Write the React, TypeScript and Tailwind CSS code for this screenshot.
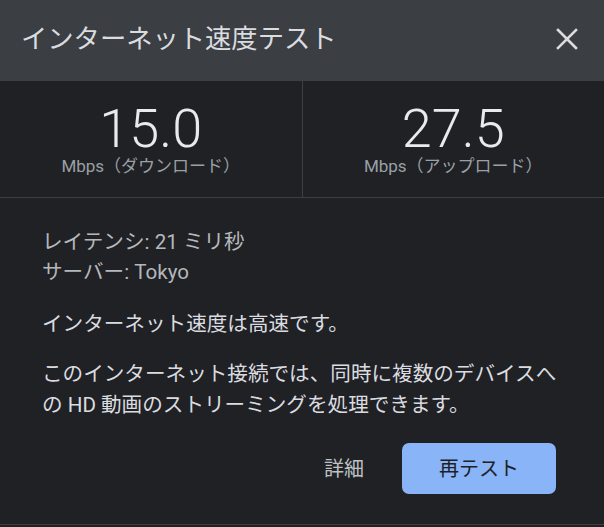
import React from "react";

const FONT = 'Roboto, "Noto Sans CJK JP", "Noto Sans", sans-serif';

function CloseIcon() {
  return (
    <svg width="22" height="22" viewBox="0 0 22 22" fill="none">
      <path d="M2 2 L20 20 M20 2 L2 20" stroke="#dadce0" strokeWidth="2.6" strokeLinecap="square" />
    </svg>
  );
}

function Stat({ value, label }: { value: string; label: string }) {
  return (
    <div className="flex flex-1 flex-col items-center pt-[21px]">
      <div className="text-[54px] font-light leading-[54px] text-[#e8eaed]">{value}</div>
      <div className="text-[17px] leading-[20px] text-[#9aa0a6]">{label}</div>
    </div>
  );
}

export default function App() {
  return (
    <div className="h-[527px] w-[604px] overflow-hidden bg-[#202124]" style={{ fontFamily: FONT }}>
      <header className="flex h-[81px] items-center justify-between bg-[#3b3e42] pb-[3px] pl-[21px] pr-[26px]">
        <h1 className="text-[26.3px] font-normal leading-none text-[#dadce0]">インターネット速度テスト</h1>
        <CloseIcon />
      </header>

      <section className="flex h-[117px] border-b border-[#3c4043]">
        <Stat value="15.0" label="Mbps（ダウンロード）" />
        <div className="w-px bg-[#3c4043]" />
        <Stat value="27.5" label="Mbps（アップロード）" />
      </section>

      <main className="border-b border-[#3c4043] pb-[30px] pl-[42px] pr-[48px] pt-[29px] text-[20.6px]">
        <div className="leading-[30px] text-[#b4b8bd]">
          <p>レイテンシ: 21 ミリ秒</p>
          <p>サーバー: Tokyo</p>
        </div>
        <p className="mt-[22px] leading-[30px] text-[#dadce0]">インターネット速度は高速です。</p>
        <p className="mt-[20px] whitespace-nowrap leading-[31px] text-[#dadce0]">
          このインターネット接続では、同時に複数のデバイスへ
          <br />
          の HD 動画のストリーミングを処理できます。
        </p>
        <div className="mt-[22px] flex items-center justify-end gap-[22px]">
          <button className="px-[16px] text-[20px] text-[#bdc1c6]">詳細</button>
          <button className="flex h-[51px] w-[154px] items-center justify-center rounded-[7px] bg-[#8ab4f8] text-[20px] text-[#202124]">
            再テスト
          </button>
        </div>
      </main>
    </div>
  );
}
